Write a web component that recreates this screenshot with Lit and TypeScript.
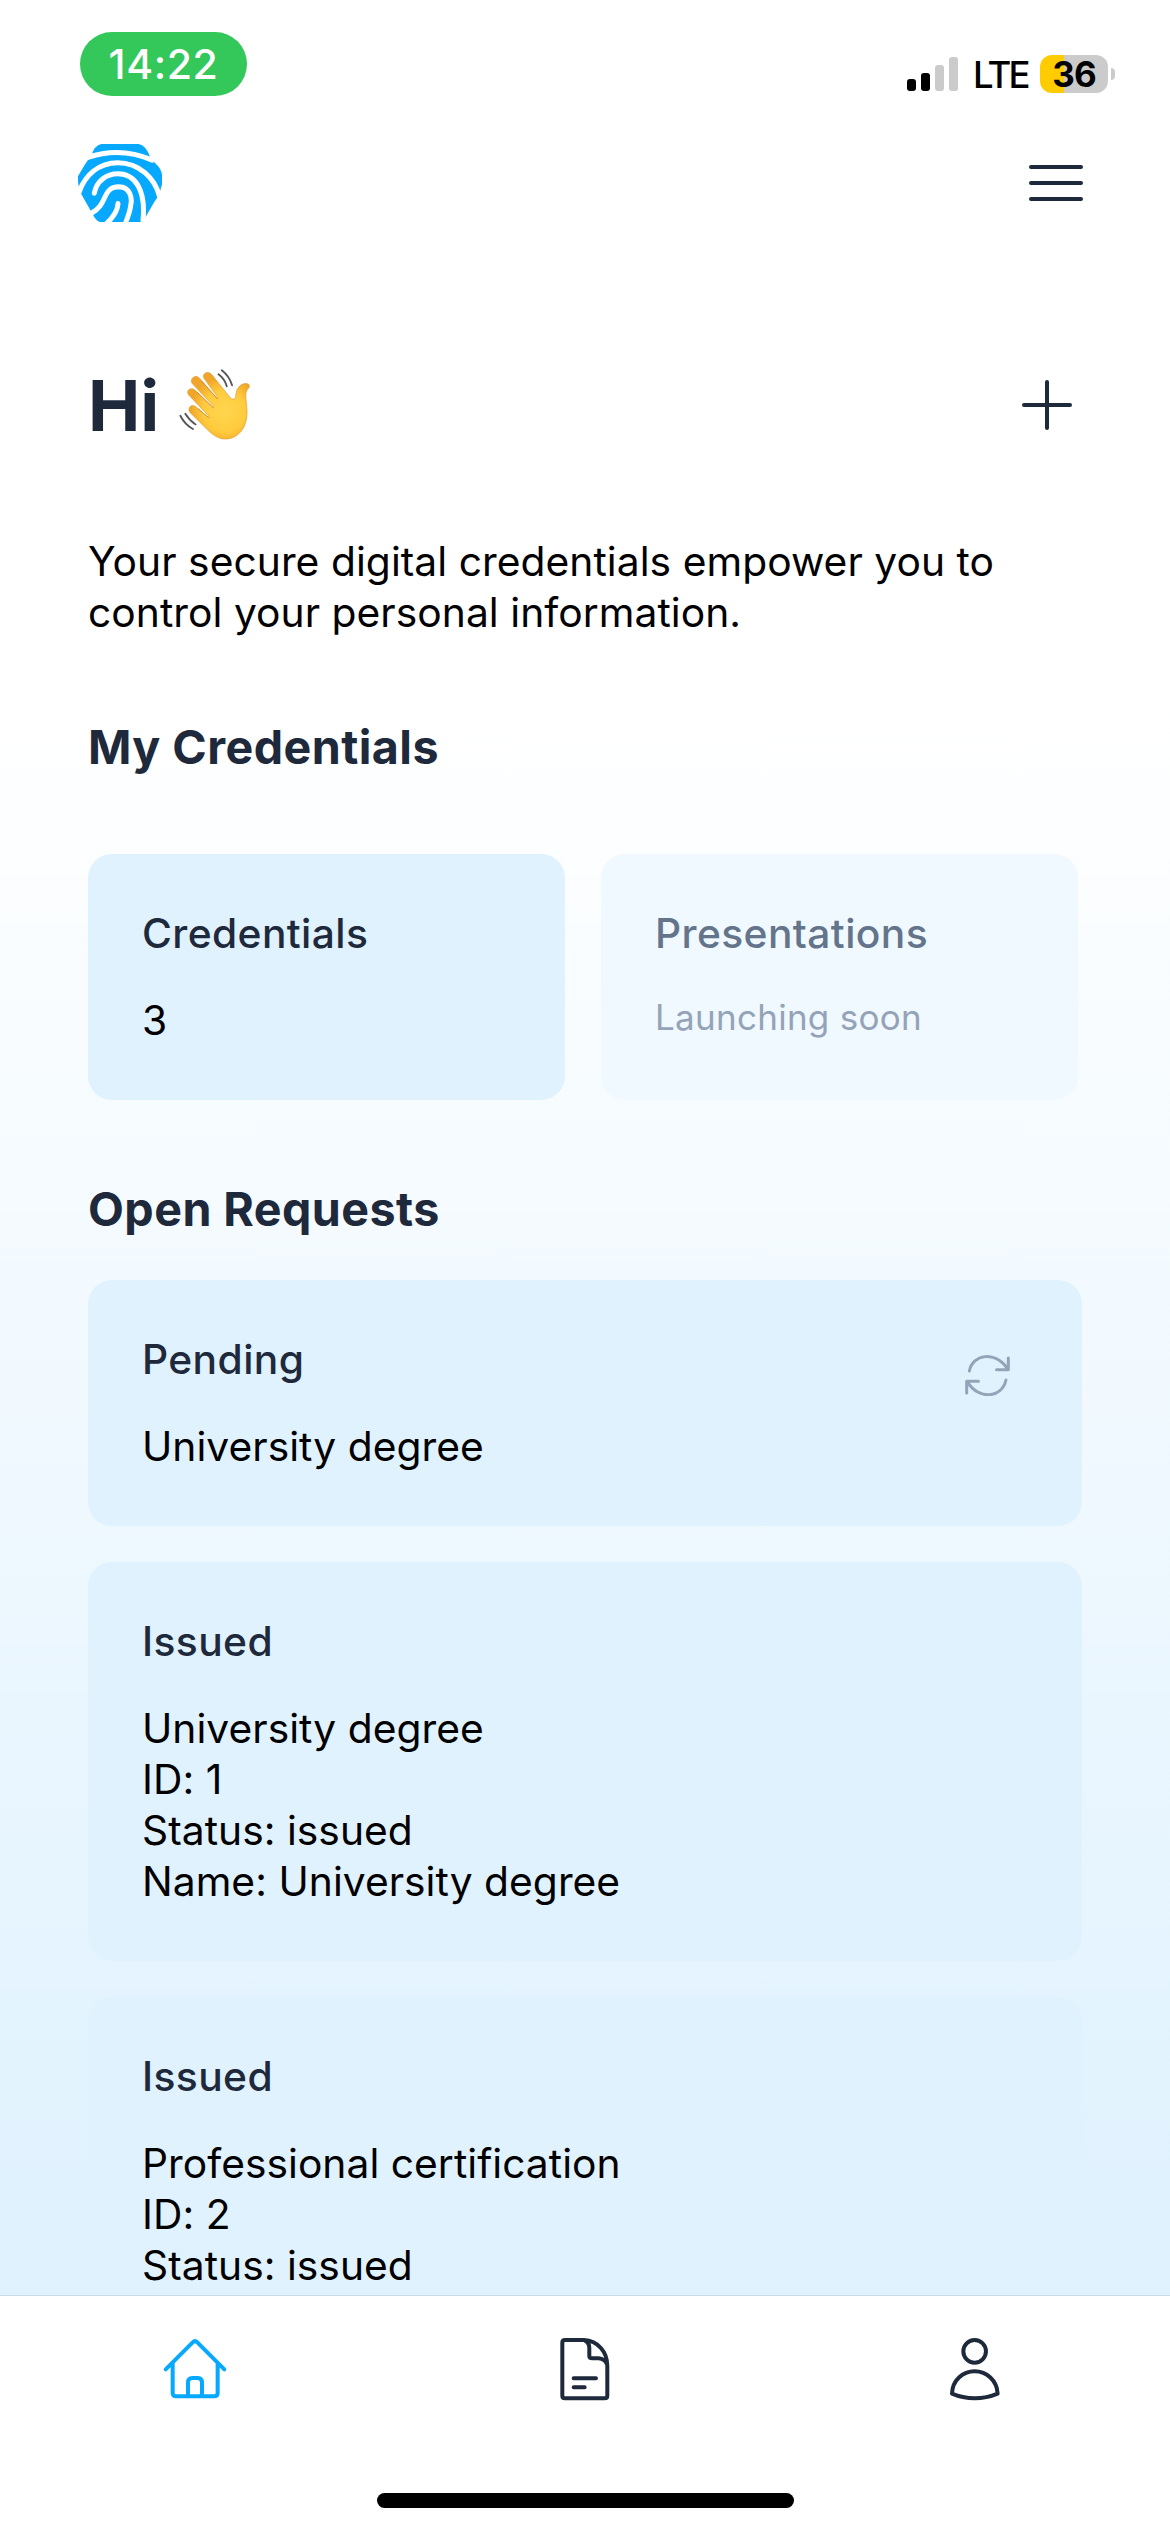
import { LitElement, html, css, svg } from "lit";
import { customElement, property } from "lit/decorators.js";

const fingerprint = svg`<svg class="logo" viewBox="54 372 252 233" preserveAspectRatio="none">
  <path fill="#06a9ff" d="M94 407Q103 376 124 372H236Q258 376 271 412L287 431Q303 444 306 464V492L297 524L281 548L253 597Q249 604 240 606H122Q108 602 99 583L64 522Q52 498 54 468L72 438Q79 425 94 407Z"/>
  <g fill="none" stroke="#fff" stroke-width="15" stroke-linecap="round">
    <path d="M84 412Q180 379 277 420"/>
    <path d="M57 517C75 463 118 428 173 428C238 428 284 474 298 527"/>
    <path d="M103 519C109 483 139 461 174 461C227 461 258 512 249 600"/>
    <path d="M94 579C146 552 124 501 177 500C209 501 218 531 212 556C210 576 202 593 195 612"/>
    <path d="M174 550C173 574 157 594 137 612"/>
  </g>
</svg>`;

const wave = svg`<svg class="wave" viewBox="325 85 220 220">
  <defs>
    <radialGradient id="skin" gradientUnits="userSpaceOnUse" cx="465" cy="215" r="105">
      <stop offset="0" stop-color="#ffd650"/><stop offset=".6" stop-color="#ffcb3d"/><stop offset="1" stop-color="#efa42a"/>
    </radialGradient>
  </defs>
  <path fill="url(#skin)" stroke="#e29a2e" stroke-width="2" stroke-linejoin="round" d="M404 117C396 103 413 91 426 104L482 174C488 181 498 180 499 172C499 153 508 134 527 132C541 131 544 141 535 149C524 161 532 184 533 215C534 266 506 298 468 299C448 299 434 289 417 274L362 220C351 207 365 191 379 202L415 234L419 231L358 167C347 154 362 140 377 152L428 204L433 201L368 132C359 117 377 103 389 115L441 176L445 174Z"/>
  <path fill="none" stroke="#d98b25" stroke-width="3" stroke-linecap="round" d="M386 208L417 234M383 158L431 204M396 124L444 178"/>
  <path fill="none" stroke="#555" stroke-width="5.5" stroke-linecap="round" d="M447 104Q466 118 472 140M457 92Q480 110 488 137M347 223Q359 243 378 255M332 229Q346 256 370 269"/>
</svg>`;

const homeIcon = svg`<svg class="icon home" viewBox="96 200 198 190">
  <path d="M107 297L188 216Q195 209 202 216L283 297M128 279V368Q128 378 138 378H252Q263 378 263 368V279M174 377V337Q174 323 187 323H204Q216 323 216 337V377"/>
</svg>`;

const docIcon = svg`<svg class="icon doc" viewBox="85 77 160 200">
  <path d="M106 89H163C205 91 233 125 233 166V256Q233 264 225 264H106Q98 264 98 256V97Q98 89 106 89ZM165 90Q179 96 179 113V136Q179 144 188 144H207Q226 145 233 164M132 204H199M132 231H165"/>
</svg>`;

const personIcon = svg`<svg class="icon person" viewBox="85 77 160 200">
  <circle cx="165" cy="123" r="34"/>
  <path d="M97 250C98 210 129 183 165 183S232 210 234 250Q201 264 165 264T97 250Z"/>
</svg>`;

const refreshIcon = svg`<svg class="refresh" viewBox="104 106 134 123" preserveAspectRatio="none">
  <path d="M117 154C127 104 193 91 231 148M233 115V150H198M226 181C214 236 145 241 112 188M109 220V185H144"/>
</svg>`;

@customElement("status-bar")
export class StatusBar extends LitElement {
  static styles = css`
    :host { display: flex; justify-content: space-between; align-items: flex-start; height: 144px; padding: 32px 55px 0 80px; box-sizing: border-box; }
    .time { width: 167px; height: 64px; line-height: 64px; border-radius: 32px; background: #34c759; color: #fff; text-align: center; font-size: 41px; font-weight: 500; letter-spacing: 0.6px; }
    .right { display: flex; align-items: center; padding-top: 23px; height: 38px; }
    .signal { width: 51px; height: 34px; margin-right: 15px; }
    .net { font-size: 36.5px; line-height: 40px; padding-top: 2px; width: 67px; font-weight: 450; letter-spacing: -2.8px; }
    .battery { width: 68px; height: 38px; border-radius: 12px; background: linear-gradient(90deg, #ffcc00 24px, #cbcbcb 24px); text-align: center; font-size: 35px; line-height: 38px; font-weight: 700; letter-spacing: -1px; }
    .nub { width: 4px; height: 12px; margin-left: 3px; border-radius: 0 5px 5px 0; background: #cbcbcb; }
  `;
  render() {
    return html`<div class="time">14:22</div>
      <div class="right">
        <svg class="signal" viewBox="0 0 51 34">
          <rect x="0" y="22" width="9" height="12" rx="3"/><rect x="14" y="16" width="9" height="18" rx="3"/>
          <rect x="28" y="8" width="9" height="26" rx="3" fill="#cbcbcb"/><rect x="42" y="0" width="9" height="34" rx="3" fill="#cbcbcb"/>
        </svg>
        <span class="net">LTE</span><div class="battery">36</div><div class="nub"></div>
      </div>`;
  }
}

@customElement("info-card")
export class InfoCard extends LitElement {
  @property() heading = "";
  @property({ attribute: false }) lines: string[] = [];
  @property({ type: Boolean }) muted = false;
  @property({ type: Boolean }) refreshable = false;
  static styles = css`
    :host { display: flex; justify-content: space-between; align-items: flex-start; box-sizing: border-box; min-height: 246px; padding: 54px; border-radius: 24px; background: #e0f2fe; }
    :host([muted]) { background: #f0f9ff; }
    .title { font-weight: 500; color: #1e293b; line-height: 51px; margin-bottom: 36px; letter-spacing: 0.4px; }
    .line { line-height: 51px; white-space: nowrap; letter-spacing: 0.03px; }
    :host([muted]) .title { color: #64748b; }
    :host([muted]) .line { color: #94a3b8; font-size: 35px; line-height: 44px; letter-spacing: 0.27px; }
    .refresh { width: 45px; height: 41px; margin: 21px 18px 0 0; fill: none; stroke: #94a3b8; stroke-width: 9; stroke-linecap: round; stroke-linejoin: round; }
  `;
  render() {
    return html`<div class="text"><div class="title">${this.heading}</div>
      ${this.lines.map((l) => html`<div class="line">${l}</div>`)}</div>
      ${this.refreshable ? refreshIcon : null}`;
  }
}

@customElement("app-root")
export class AppRoot extends LitElement {
  static styles = css`
    :host { display: flex; flex-direction: column; width: 1170px; height: 2532px; overflow: hidden; color: #000; font-family: Inter, "Liberation Sans", sans-serif; font-size: 40.75px; background: linear-gradient(#fff 700px, #e0f2fe 2200px); }
    .top { display: flex; justify-content: space-between; align-items: center; height: 78px; padding: 0 87px 0 78px; flex: none; }
    .logo { width: 84px; height: 78px; }
    .menu { width: 54px; height: 36px; }
    .menu, .plus { fill: none; stroke: #1e293b; stroke-width: 4; stroke-linecap: round; }
    .content { flex: 1; min-height: 0; overflow: hidden; padding: 142px 88px 0; display: flex; flex-direction: column; }
    .content > * { flex: none; }
    .hello { display: flex; align-items: center; height: 84px; padding-right: 10px; }
    .hi { font-size: 70px; font-weight: 700; line-height: 84px; color: #1e293b; margin: 0 19px 0 0; }
    .wave { width: 73px; height: 73px; margin-bottom: 4px; }
    .plus { width: 50px; height: 50px; margin: 0 0 2px auto; }
    .intro { line-height: 51px; margin: 88px 0 80px; letter-spacing: 0.045px; }
    .section { font-size: 46.6px; line-height: 58px; font-weight: 700; color: #1e293b; margin: 0; letter-spacing: 0.45px; }
    .pair { display: grid; grid-template-columns: 477px 477px; gap: 36px; margin: 78px 0 80px; }
    .list { display: flex; flex-direction: column; gap: 36px; margin-top: 42px; }
    .nav { flex: none; height: 237px; box-sizing: border-box; border-top: 1px solid #cfdbe4; background: #fff; display: flex; flex-direction: column; align-items: center; }
    .tabs { display: grid; grid-template-columns: repeat(3, 1fr); width: 100%; height: 146px; place-items: center; }
    .icon { fill: none; stroke: #1e293b; stroke-width: 12; stroke-linecap: round; stroke-linejoin: round; }
    .home { width: 66px; height: 63.3px; stroke: #06a9ff; }
    .doc, .person { width: 53.3px; height: 66.7px; }
    .indicator { width: 417px; height: 15px; margin-top: 51px; border-radius: 8px; background: #000; }
  `;
  render() {
    return html`<status-bar></status-bar>
      <header class="top">${fingerprint}
        <svg class="menu" viewBox="0 0 54 36"><path d="M2 2H52M2 18H52M2 34H52"/></svg>
      </header>
      <main class="content">
        <div class="hello"><h1 class="hi">Hi</h1>${wave}
          <svg class="plus" viewBox="0 0 50 50"><path d="M25 2V48M2 25H48"/></svg></div>
        <div class="intro">Your secure digital credentials empower you to<br>control your personal information.</div>
        <h2 class="section">My Credentials</h2>
        <div class="pair">
          <info-card heading="Credentials" .lines=${["3"]}></info-card>
          <info-card muted heading="Presentations" .lines=${["Launching soon"]}></info-card>
        </div>
        <h2 class="section">Open Requests</h2>
        <div class="list">
          <info-card refreshable heading="Pending" .lines=${["University degree"]}></info-card>
          <info-card heading="Issued" .lines=${["University degree", "ID: 1", "Status: issued", "Name: University degree"]}></info-card>
          <info-card heading="Issued" .lines=${["Professional certification", "ID: 2", "Status: issued"]}></info-card>
        </div>
      </main>
      <nav class="nav"><div class="tabs">${homeIcon}${docIcon}${personIcon}</div><div class="indicator"></div></nav>`;
  }
}
